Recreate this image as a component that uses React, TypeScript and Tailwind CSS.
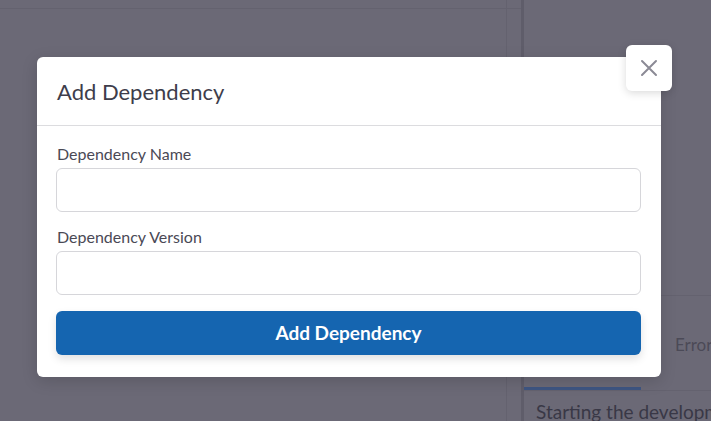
import React from "react";

const Field = ({ label, className = "" }: { label: string; className?: string }) => (
  <div className={className}>
    <label className="block text-[16px] leading-5 text-[#4a4955] pl-px">{label}</label>
    <input
      type="text"
      className="mt-1 block w-full h-[44px] rounded-md border border-[#d6d6da] bg-white px-3 outline-none"
    />
  </div>
);

const App = () => {
  return (
    <div className="relative h-[421px] w-[711px] overflow-hidden bg-[#6b6976] font-[Lato,sans-serif]">
      {/* Dimmed page behind the dialog */}
      <div className="flex h-full">
        <div className="w-[507px] shrink-0 border-r border-[#64626f]">
          <div className="h-[9px] border-b border-[#64626f]"></div>
        </div>
        <div className="w-[14px] shrink-0">
          <div className="h-[9px] border-b border-[#64626f]"></div>
        </div>
        <div className="flex min-w-0 flex-1 flex-col overflow-hidden border-l-[3px] border-[#5f5d6a]">
          <div className="h-[296px] shrink-0 border-b border-[#64626f]"></div>
          <div className="flex h-[95px] shrink-0 items-end border-b border-[#64626f]">
            <div className="h-[3px] w-[117px] shrink-0 bg-[#3e5582]"></div>
            <div className="ml-[34px] self-center pt-[4px] text-[17px] text-[#4b4a57] whitespace-nowrap">
              Errors
            </div>
          </div>
          <div className="whitespace-nowrap pl-[12px] pt-[9px] text-[19px] leading-6 text-[#393846]">
            Starting the development server...
          </div>
        </div>
      </div>

      {/* Dialog */}
      <div className="absolute left-[37px] top-[57px] w-[624px] rounded-md bg-white shadow-[0_4px_16px_rgba(0,0,0,0.15)]">
        <div className="flex h-[69px] items-center border-b border-[#dcdcdf] px-5">
          <h2 className="text-[22px] text-[#3e3d4b]">Add Dependency</h2>
        </div>
        <div className="pl-[19px] pr-5 pt-[18px] pb-[22px]">
          <Field label="Dependency Name" />
          <Field label="Dependency Version" className="mt-[15px]" />
          <button className="mt-4 h-[44px] w-full rounded-md bg-[#1565b0] text-[19px] font-bold text-white shadow-[0_4px_8px_rgba(0,0,0,0.12)]">
            Add Dependency
          </button>
        </div>
      </div>

      {/* Close button */}
      <button className="absolute left-[626px] top-[45px] flex h-[46px] w-[46px] items-center justify-center rounded-md bg-white shadow-[0_2px_8px_rgba(0,0,0,0.15)]">
        <svg width="18" height="18" viewBox="0 0 18 18" fill="none" stroke="#8b8a95" strokeWidth="2" strokeLinecap="round">
          <path d="M2 2l14 14M16 2L2 16" />
        </svg>
      </button>
    </div>
  );
};

export default App;
